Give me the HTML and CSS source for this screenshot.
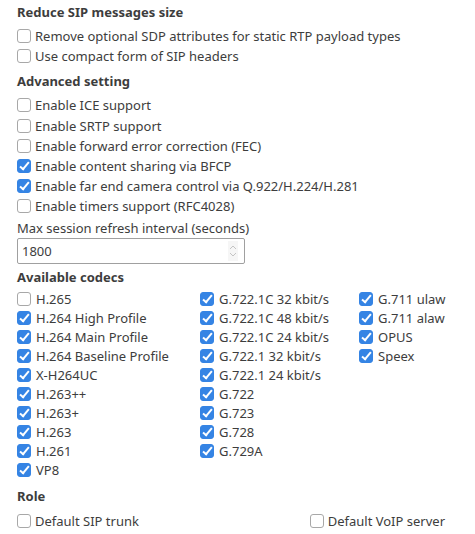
FILE: index.html
```html
<!DOCTYPE html>
<html>
<head>
<meta charset="utf-8">
<link rel="stylesheet" href="styles.css">
</head>
<body>
<div class="page">
  <h3 class="heading first">Reduce SIP messages size</h3>
  <div class="rows">
    <label class="row"><span class="cb"></span>Remove optional SDP attributes for static RTP payload types</label>
    <label class="row"><span class="cb"></span>Use compact form of SIP headers</label>
  </div>

  <h3 class="heading">Advanced setting</h3>
  <div class="rows">
    <label class="row"><span class="cb"></span>Enable ICE support</label>
    <label class="row"><span class="cb"></span>Enable SRTP support</label>
    <label class="row"><span class="cb"></span>Enable forward error correction (FEC)</label>
    <label class="row"><span class="cb on"></span>Enable content sharing via BFCP</label>
    <label class="row"><span class="cb on"></span>Enable far end camera control via Q.922/H.224/H.281</label>
    <label class="row"><span class="cb"></span>Enable timers support (RFC4028)</label>
  </div>
  <div class="field-label">Max session refresh interval (seconds)</div>
  <div class="spin">
    <span class="spin-value">1800</span>
    <span class="spin-arrows">
      <svg width="8" height="14" viewBox="0 0 8 14"><path d="M1 5 L4 2 L7 5" fill="none" stroke="#c4c4c4" stroke-width="1"/><path d="M1 9 L4 12 L7 9" fill="none" stroke="#c4c4c4" stroke-width="1"/></svg>
    </span>
  </div>

  <h3 class="heading codecs-head">Available codecs</h3>
  <div class="codecs">
    <div class="col col1">
      <label class="crow"><span class="cb"></span>H.265</label>
      <label class="crow"><span class="cb on"></span>H.264 High Profile</label>
      <label class="crow"><span class="cb on"></span>H.264 Main Profile</label>
      <label class="crow"><span class="cb on"></span>H.264 Baseline Profile</label>
      <label class="crow"><span class="cb on"></span>X-H264UC</label>
      <label class="crow"><span class="cb on"></span>H.263++</label>
      <label class="crow"><span class="cb on"></span>H.263+</label>
      <label class="crow"><span class="cb on"></span>H.263</label>
      <label class="crow"><span class="cb on"></span>H.261</label>
      <label class="crow"><span class="cb on"></span>VP8</label>
    </div>
    <div class="col col2">
      <label class="crow"><span class="cb on"></span>G.722.1C 32 kbit/s</label>
      <label class="crow"><span class="cb on"></span>G.722.1C 48 kbit/s</label>
      <label class="crow"><span class="cb on"></span>G.722.1C 24 kbit/s</label>
      <label class="crow"><span class="cb on"></span>G.722.1 32 kbit/s</label>
      <label class="crow"><span class="cb on"></span>G.722.1 24 kbit/s</label>
      <label class="crow"><span class="cb on"></span>G.722</label>
      <label class="crow"><span class="cb on"></span>G.723</label>
      <label class="crow"><span class="cb on"></span>G.728</label>
      <label class="crow"><span class="cb on"></span>G.729A</label>
    </div>
    <div class="col col3">
      <label class="crow"><span class="cb on"></span>G.711 ulaw</label>
      <label class="crow"><span class="cb on"></span>G.711 alaw</label>
      <label class="crow"><span class="cb on"></span>OPUS</label>
      <label class="crow"><span class="cb on"></span>Speex</label>
    </div>
  </div>

  <h3 class="heading role-head">Role</h3>
  <div class="role">
    <label class="row"><span class="cb"></span>Default SIP trunk</label>
    <label class="row"><span class="cb"></span>Default VoIP server</label>
  </div>
</div>
</body>
</html>
```

FILE: styles.css
```css
html, body {
  margin: 0;
  padding: 0;
  background: #ffffff;
}

body {
  font-family: "Noto Sans", "Open Sans", sans-serif;
  font-size: 13px;
  color: #3d3d3d;
}

.page {
  padding: 2px 17px 0 17px;
}

.heading {
  margin: 5px 0 4px 0;
  font-size: 13px;
  font-weight: bold;
  line-height: 20px;
  color: #3d3d3d;
}

.heading.first {
  margin-top: 0;
}

.rows {
  display: flex;
  flex-direction: column;
}

.row {
  display: flex;
  align-items: center;
  height: 20.2px;
  line-height: 20px;
  white-space: nowrap;
}

.cb {
  box-sizing: border-box;
  width: 14px;
  height: 14px;
  border: 1px solid #a8a8a8;
  border-radius: 3px;
  background: #ffffff;
  margin-right: 4px;
  flex: none;
  position: relative;
}

.cb.on {
  background: #3584e4;
  border-color: #3584e4;
}

.cb.on::after {
  content: "";
  position: absolute;
  left: 4px;
  top: 0px;
  width: 3px;
  height: 8px;
  border: solid #ffffff;
  border-width: 0 2px 2px 0;
  transform: rotate(40deg);
}

.field-label {
  line-height: 20px;
  margin-top: 1px;
}

.spin {
  box-sizing: border-box;
  width: 228px;
  height: 26px;
  margin-top: 0;
  border: 1px solid #a0a0a0;
  border-radius: 2px;
  display: flex;
  align-items: center;
  justify-content: space-between;
  padding: 0 6px 0 4px;
}

.spin-arrows {
  display: flex;
  align-items: center;
  background: #f6f6f6;
  height: 20px;
  padding: 0 1px;
}

.codecs-head {
  margin-top: 3px;
  margin-bottom: 3px;
}

.codecs {
  display: flex;
}

.col {
  display: flex;
  flex-direction: column;
}

.col1 { width: 183px; }
.col2 { width: 159px; }

.crow {
  display: flex;
  align-items: center;
  height: 19px;
  white-space: nowrap;
}

.crow .cb {
  margin-right: 5px;
}

.role-head {
  margin-top: 6px;
  margin-bottom: 5px;
}

.role {
  display: flex;
  justify-content: space-between;
  width: 428px;
}
```
